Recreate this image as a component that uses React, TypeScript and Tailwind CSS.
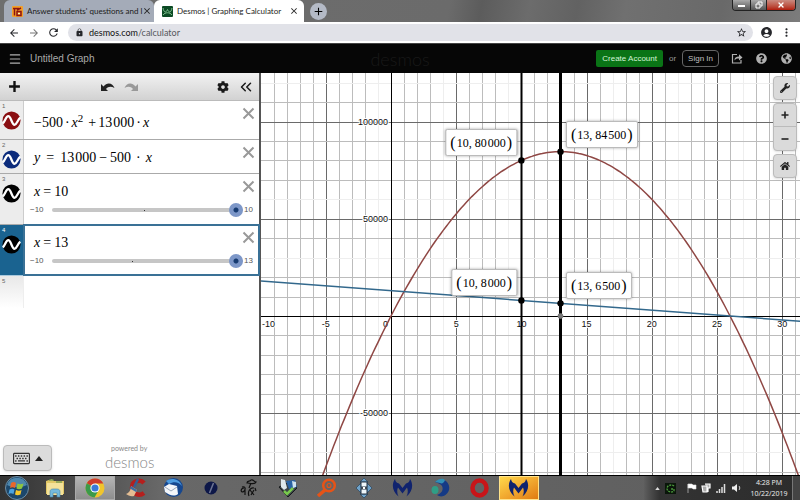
import { useState } from 'react'
import type { ReactNode } from 'react'
import {
  MdArrowBack,
  MdArrowForward,
  MdRefresh,
  MdLock,
  MdStarBorder,
  MdAccountCircle,
  MdMoreVert,
  MdClose,
  MdAdd,
} from 'react-icons/md'
import { FaCog, FaGlobeAmericas, FaHome, FaQuestionCircle, FaRegKeyboard, FaWrench } from 'react-icons/fa'
import { ChevronsLeft, Menu, X } from 'lucide-react'

/* ---------- browser chrome ---------- */

function BrowserTab({ title, icon, active }: { title: string; icon: ReactNode; active?: boolean }) {
  return (
    <div
      className={`flex h-full w-[150px] items-center rounded-t-md pl-2 pr-1 ${active ? 'bg-white' : 'bg-[#a4abb8]'}`}
    >
      {icon}
      <span className="ml-1 flex-1 whitespace-nowrap text-[8px] leading-4 text-[#1c1c20]">{title}</span>
      <button type="button" aria-label={`Close ${title}`} className="flex size-3 items-center justify-center text-[#222]">
        <MdClose size={10} />
      </button>
    </div>
  )
}

function BrowserChrome() {
  return (
    <header className="font-['Lato','Noto_Sans',sans-serif]">
      <div className="flex h-[22px] items-stretch bg-[linear-gradient(100deg,#6e6e6e_0%,#6b6b6b_56%,#5c5c5c_60%,#6c6c6c_66%,#626262_72%,#707070_78%,#696969_90%,#7c7c7c_100%)] pl-1">
        <BrowserTab
          title="Answer students' questions and l"
          icon={
            <svg viewBox="0 0 11 11" className="size-[11px] shrink-0">
              <rect width="11" height="11" rx="1" fill="#f2a02a" />
              <path d="M1 2.500h6M2.500 2.500v7M5 5.500h4v4H5zM5 4l4-2" stroke="#8d1411" strokeWidth="1.500" fill="none" />
              <path d="M6 7.500h2" stroke="#fff2c0" />
            </svg>
          }
        />
        <BrowserTab
          active
          title="Desmos | Graphing Calculator"
          icon={
            <svg viewBox="0 0 11 11" className="size-[11px] shrink-0">
              <rect width="11" height="11" rx="1" fill="#0b4a24" />
              <path d="M1 2c1 5 3 5 4.500 1.500C7 7 9 7 10 2M1 9c2-3 7-3 9 0" stroke="#7fc08e" fill="none" />
            </svg>
          }
        />
        <button
          type="button"
          aria-label="New tab"
          className="ml-[6px] flex size-[17px] items-center justify-center self-center rounded-full bg-[#b4bac6] text-black"
        >
          <MdAdd size={13} />
        </button>
        <div className="ml-auto mr-1 flex h-[11px] overflow-hidden rounded-b border border-t-0 border-[#222] text-white">
          <button type="button" aria-label="Minimize" className="flex w-[17px] items-end justify-center bg-linear-to-b from-[#aaa] to-[#555] pb-[3px]">
            <span className="h-[2px] w-[7px] bg-white" />
          </button>
          <button type="button" aria-label="Restore" className="flex w-[17px] items-center justify-center border-x border-[#222] bg-linear-to-b from-[#aaa] to-[#555]">
            <svg viewBox="0 0 8 8" className="size-[8px]">
              <path d="M3 2.500V1h4v4H5.500M1 3h4v4H1z" fill="none" stroke="#fff" />
            </svg>
          </button>
          <button type="button" aria-label="Close window" className="flex w-[28px] items-center justify-center bg-linear-to-b from-[#c98a80] to-[#b01808]">
            <X size={8} strokeWidth={4} />
          </button>
        </div>
      </div>
      <div className="flex h-[22px] items-center border-b border-[#444] bg-white text-[#26272b]">
        <div className="flex w-[68px] items-center justify-between pl-2 pr-2">
          <button type="button" aria-label="Back"><MdArrowBack size={12} /></button>
          <button type="button" aria-label="Forward" className="text-[#777]"><MdArrowForward size={12} /></button>
          <button type="button" aria-label="Reload"><MdRefresh size={13} /></button>
        </div>
        <div className="flex h-[17px] flex-1 items-center rounded-full bg-[#e1e2e8] px-[6px]">
          <MdLock size={9} className="ml-[1px]" />
          <a href="#" className="ml-[5px] flex-1 text-[9px] leading-4 text-[#111]">
            desmos.com<span className="text-[#55575c]">/calculator</span>
          </a>
          <button type="button" aria-label="Bookmark"><MdStarBorder size={11} /></button>
        </div>
        <button type="button" aria-label="Profile" className="ml-[7px]"><MdAccountCircle size={13} /></button>
        <button type="button" aria-label="Menu" className="ml-[7px] mr-[7px]"><MdMoreVert size={13} /></button>
      </div>
    </header>
  )
}

/* ---------- desmos header ---------- */

function AppHeader() {
  return (
    <div className="flex h-[29px] items-center bg-[#060606] pl-2 pr-2 text-[#b0b0b0]">
      <div className="flex flex-1 items-center">
        <button type="button" aria-label="Open menu">
          <Menu size={14} strokeWidth={2} />
        </button>
        <h1 className="ml-2 text-[10px] text-[#a9a9a9]">Untitled Graph</h1>
      </div>
      <div className="font-['Lato',sans-serif] text-[18px] font-light leading-6 text-[#191919]">desmos</div>
      <div className="flex flex-1 items-center justify-end text-[8px]">
        <button type="button" className="h-[17px] rounded-xs bg-[#0a7416] px-[6px] text-[#d5f5d8]">Create Account</button>
        <span className="mx-[6px] text-[#999]">or</span>
        <button type="button" className="h-[17px] rounded-sm border border-[#666] px-[5px] text-[#c0c0c0]">Sign In</button>
        <button type="button" aria-label="Share" className="ml-3">
          <svg viewBox="0 0 12 11" className="h-[11px] w-[12px]">
            <path d="M6 1.500H1.500v8.500h8.500V7" fill="none" stroke="#b0b0b0" strokeWidth="1.200" />
            <path d="M3.500 7.500c0-3 1.500-4 4.500-4V1.200L11.500 4.500 8 7.500V5.500c-2 0-3.500.3-4.500 2z" fill="#b0b0b0" />
          </svg>
        </button>
        <button type="button" aria-label="Help" className="ml-[13px]"><FaQuestionCircle size={11} /></button>
        <button type="button" aria-label="Language" className="ml-[14px]"><FaGlobeAmericas size={11} /></button>
      </div>
    </div>
  )
}

/* ---------- expression list ---------- */

function Thousands({ head, tail }: { head: string; tail: string }) {
  return (
    <>
      {head}
      <span className="ml-[1px]">{tail}</span>
    </>
  )
}

interface ExpressionRowProps {
  index: number
  color: string
  math: ReactNode
  tall?: boolean
  selected?: boolean
  slider?: { min: number; max: number }
}

function ExpressionRow({ index, color, math, tall, selected, slider }: ExpressionRowProps) {
  const [value, setValue] = useState(slider ? slider.max : 0)

  return (
    <li className={`flex border-b ${selected ? 'border-[#a9c9dd]' : 'border-[#aaa]'}`}>
      <div className={`w-6 shrink-0 border-r ${selected ? 'border-[#1a6390] bg-[#1a6390] text-white' : 'border-[#ccc] bg-[#ececec] text-[#666]'}`}>
        <div className="h-[10px] pl-[2px] pt-[2px] text-[6px] leading-[6px]">{index}</div>
        <button type="button" aria-label={`Toggle expression ${index}`} className="ml-[2px] block">
          <svg viewBox="0 0 20 20" className="size-[19px]">
            <circle cx="10" cy="10" r="9.500" fill={color} />
            <path d="M.8 13C3.500 11 4 5.500 6.600 5.500c3 0 3.600 9 6.600 9 2.400 0 3-5 6-7.500" fill="none" stroke="#fff" strokeWidth="2.400" />
          </svg>
        </button>
      </div>
      <div
        className={`flex-1 pl-[10px] pr-1 pt-[6px] ${selected ? 'outline-2 -outline-offset-1 outline-[#3a7196]' : ''} ${slider || tall ? 'pb-[6px]' : 'pb-[5px]'}`}
      >
        <div className="flex items-start justify-between">
          <div className={`whitespace-nowrap font-['Liberation_Serif',serif] text-[14px] leading-5 text-black ${tall ? 'pt-[6px]' : 'pt-[2px]'}`}>
            {math}
          </div>
          <button type="button" aria-label={`Delete expression ${index}`}>
            <svg viewBox="0 0 13 13" className="size-[13px]">
              <path d="M1.500 1.500l10 10M11.500 1.500l-10 10" stroke="#999" strokeWidth="2" />
            </svg>
          </button>
        </div>
        {slider && (
          <div className="-ml-[4px] flex h-4 items-center text-[8px] text-[#555]">
            <span className="w-[22px]">{`−${Math.abs(slider.min)}`}</span>
            <div className="relative flex flex-1 items-center">
              <input
                type="range"
                aria-label={`x value, expression ${index}`}
                min={slider.min}
                max={slider.max}
                value={value}
                onChange={(e) => setValue(Number(e.target.value))}
                className="h-1 w-full appearance-none rounded-full bg-[#c6c6c6] [&::-webkit-slider-thumb]:size-[14px] [&::-webkit-slider-thumb]:appearance-none [&::-webkit-slider-thumb]:rounded-full [&::-webkit-slider-thumb]:bg-[radial-gradient(circle,#163a70_0px,#163a70_2px,#7d97c8_3px)]"
              />
              <span
                className="absolute size-[1px] bg-[#333]"
                style={{ left: `${(-slider.min / (slider.max - slider.min)) * 96}%` }}
              />
            </div>
            <span className="w-[12px] pl-[1px]">{slider.max}</span>
          </div>
        )}
      </div>
    </li>
  )
}

function ExpressionPanel() {
  return (
    <aside className="flex w-[261px] shrink-0 flex-col border-r-2 border-[#555] bg-white">
      <div className="flex h-[28px] items-center border-b border-[#bbb] bg-linear-to-b from-[#f2f2f2] to-[#d2d2d2] pl-2 pr-2 text-[#1a1a1a]">
        <button type="button" aria-label="Add item">
          <svg viewBox="0 0 12 12" className="size-[13px]">
            <path d="M6 1v10M1 6h10" stroke="#111" strokeWidth="2.200" />
          </svg>
        </button>
        <div className="mx-auto flex gap-[9px]">
          <button type="button" aria-label="Undo">
            <svg viewBox="0 0 14 10" className="h-[10px] w-[14px]">
              <path d="M0 2v7h7L5 7c2-2.500 5-3 8.500-1C12 1 6-.5 2.500 4.500z" fill="#222" />
            </svg>
          </button>
          <button type="button" aria-label="Redo">
            <svg viewBox="0 0 14 10" className="h-[10px] w-[14px]">
              <path d="M14 2v7H7l2-2C7 4.500 4 4 .5 6 2 1 8-.5 11.500 4.500z" fill="#999" />
            </svg>
          </button>
        </div>
        <button type="button" aria-label="Edit list" className="mr-2"><FaCog size={12} /></button>
        <button type="button" aria-label="Hide list"><ChevronsLeft size={18} strokeWidth={2} className="-mr-1" /></button>
      </div>
      <ol>
        <ExpressionRow
          index={1}
          color="#8a0f12"
          tall
          math={
            <>
              −500<span className="mx-[2px]">·</span><i>x</i>
              <sup className="text-[11px] leading-none">2</sup>
              <span className="ml-[5px]">+</span>
              <span className="ml-[2px]"><Thousands head="13" tail="000" /></span>
              <span className="mx-[2px]">·</span><i>x</i>
            </>
          }
        />
        <ExpressionRow
          index={2}
          color="#0c2c7c"
          math={
            <>
              <i>y</i>
              <span className="mx-[6px]">=</span>
              <Thousands head="13" tail="000" />
              <span className="mx-[3px]">−</span>500
              <span className="mx-[5px]">·</span>
              <i>x</i>
            </>
          }
        />
        <ExpressionRow
          index={3}
          color="#000"
          slider={{ min: -10, max: 10 }}
          math={<><i>x</i><span className="mx-[3px]">=</span>10</>}
        />
        <ExpressionRow
          index={4}
          color="#000"
          selected
          slider={{ min: -10, max: 13 }}
          math={<><i>x</i><span className="mx-[3px]">=</span>13</>}
        />
        <li className="flex h-[32px]">
          <div className="w-6 border-r border-[#eee] bg-linear-to-b from-[#e8e8e8] to-white pl-[2px] pt-[2px] text-[6px] leading-[6px] text-[#666]">5</div>
        </li>
      </ol>
      <div className="mt-auto flex items-end pb-[4px] pl-[3px]">
        <button
          type="button"
          aria-label="Show keypad"
          className="flex h-[26px] w-[49px] items-center justify-center gap-[5px] rounded-sm border border-[#bbb] bg-[#dcdcdc] text-[#333] shadow-sm"
        >
          <FaRegKeyboard size={17} />
          <svg viewBox="0 0 8 5" className="h-[5px] w-[8px]"><path d="M0 5l4-5 4 5z" fill="#222" /></svg>
        </button>
        <div className="ml-[53px] font-['Lato',sans-serif] text-[#888]">
          <div className="pl-[6px] text-[7px] leading-[9px]">powered by</div>
          <div className="text-[15px] font-light leading-[18px]">desmos</div>
        </div>
      </div>
    </aside>
  )
}

/* ---------- graph ---------- */

const ORIGIN = { x: 130, y: 243 }
const UNIT_X = 13.04
const UNIT_Y = 19.45 / 10000

const toX = (x: number) => ORIGIN.x + x * UNIT_X
const toY = (y: number) => ORIGIN.y - y * UNIT_Y
const crisp = (n: number) => Math.round(n) + 0.5

const columns = Array.from({ length: 120 }, (_, i) => i - 9)
const rows = Array.from({ length: 70 }, (_, i) => 12 - i)
const faintColumns = [-1, 4, 9, 17, 22, 27]
const faintRows = [12, 6, 3, -7]

const profit = (x: number) => -500 * x * x + 13000 * x
const parabola = Array.from({ length: 221 }, (_, i) => -8 + i * 0.2)
  .map((x) => `${toX(x).toFixed(1)},${toY(profit(x)).toFixed(1)}`)
  .join(' ')

const points = [
  { x: 10, y: 80000, head: '80', tail: '000', side: 'left' },
  { x: 10, y: 8000, head: '8', tail: '000', side: 'left' },
  { x: 13, y: 84500, head: '84', tail: '500', side: 'right' },
  { x: 13, y: 6500, head: '6', tail: '500', side: 'right' },
]

const lineColor = (n: number, faint: number[]) => (n % 5 === 0 ? '#6a6a6a' : faint.includes(n) ? '#eeeeee' : '#bcbcbc')

function GraphPaper() {
  return (
    <section className="relative flex-1 overflow-hidden bg-white" aria-label="Graph paper">
      <svg className="absolute inset-0 h-full w-full">
        {columns.map((n) => (
          <line key={n} x1={crisp(toX(n))} x2={crisp(toX(n))} y1="0" y2="100%" stroke={lineColor(n, faintColumns)} />
        ))}
        {rows.map((n) => (
          <line key={n} y1={crisp(toY(n * 10000))} y2={crisp(toY(n * 10000))} x1="0" x2="100%" stroke={lineColor(n, faintRows)} />
        ))}
        <line x1={130.5} x2={130.5} y1="0" y2="100%" stroke="#000" />
        <line y1={243.5} y2={243.5} x1="0" x2="100%" stroke="#000" />
        <g
          fill="#111"
          stroke="#fff"
          strokeWidth="2"
          paintOrder="stroke"
          className="font-['Liberation_Sans',sans-serif] text-[9px]"
        >
          <text x="1" y="254">-10</text>
          <text x={toX(-5)} y="254" textAnchor="middle">-5</text>
          <text x="127" y="254" textAnchor="end">0</text>
          {[5, 10, 15, 20, 25, 30].map((n) => (
            <text key={n} x={toX(n)} y="254" textAnchor="middle">{n}</text>
          ))}
          {[100000, 50000, -50000].map((n) => (
            <text key={n} x="127" y={toY(n) + 3} textAnchor="end">{n}</text>
          ))}
        </g>
        <polyline points={parabola} fill="none" stroke="#8f4744" strokeWidth="1.500" />
        <line x1={toX(-11)} y1={toY(18500)} x2={toX(40)} y2={toY(-7000)} stroke="#32688c" strokeWidth="1.500" />
        <line x1="260.500" x2="260.500" y1="0" y2="100%" stroke="#000" strokeWidth="2" />
        <line x1="299.500" x2="299.500" y1="0" y2="100%" stroke="#000" strokeWidth="3" />
        <circle cx="299.500" cy="243" r="2.800" fill="#777" />
        {points.map((p) => (
          <circle key={`${p.x}-${p.y}`} cx={toX(p.x)} cy={toY(p.y)} r="3.200" fill="#000" />
        ))}
      </svg>
      {points.map((p) => (
        <div
          key={`${p.x}-${p.y}`}
          className={`absolute flex h-[27px] items-center whitespace-nowrap rounded-xs border border-[#bbb] bg-white px-[4px] font-['Liberation_Serif',serif] text-[12px] text-black shadow-[0_0_3px_rgba(0,0,0,0.35)] ${p.side === 'left' ? '-translate-x-full' : ''}`}
          style={{
            left: Math.round(toX(p.x)) + (p.side === 'left' ? -4 : 5),
            top: Math.round(toY(p.y)) - 31,
          }}
        >
          <span className="text-[16px]">(</span>
          <span className="ml-[1px]">{p.x},</span>
          <span className="ml-[3px] mr-[1px]"><Thousands head={p.head} tail={p.tail} /></span>
          <span className="text-[16px]">)</span>
        </div>
      ))}
      <div className="absolute right-[3px] top-[3px] flex flex-col gap-[3px] text-[#222]">
        <button type="button" aria-label="Graph settings" className="flex size-[24px] items-center justify-center rounded-sm border border-[#bbb] bg-[#dadada] shadow">
          <FaWrench size={10} />
        </button>
        <div className="flex flex-col rounded-sm border border-[#bbb] bg-[#dadada] shadow">
          <button type="button" aria-label="Zoom in" className="flex h-[23px] items-center justify-center border-b border-[#bbb]">
            <svg viewBox="0 0 8 8" className="size-[8px]"><path d="M4 .5v7M.5 4h7" stroke="#222" strokeWidth="1.600" /></svg>
          </button>
          <button type="button" aria-label="Zoom out" className="flex h-[23px] items-center justify-center">
            <svg viewBox="0 0 8 8" className="size-[8px]"><path d="M.5 4h7" stroke="#222" strokeWidth="1.600" /></svg>
          </button>
        </div>
        <button type="button" aria-label="Default viewport" className="flex size-[24px] items-center justify-center rounded-sm border border-[#bbb] bg-[#dadada] shadow">
          <FaHome size={10} />
        </button>
      </div>
    </section>
  )
}

/* ---------- taskbar ---------- */

const wings = (
  <path
    d="M3 1C-.5 6 0 13 6.500 18.500 5 15.500 4.800 12 6 9.500l4.500 6 4.500-6c1.200 2.500 1 6-.5 9C21 13 21.500 6 18 1c-.5 3-2 4-4 4.500L10.500 10 7 5.500C5 5 3.500 4 3 1z"
    fill="#10236e"
  />
)

const taskbarApps: { name: string; art: ReactNode; highlight?: 'open' | 'alert' }[] = [
  {
    name: 'Explorer',
    art: (
      <>
        <path d="M1 3l6-2 2 2h10v13H1z" fill="#e2c765" />
        <path d="M2 5h16v12H2z" fill="#f4e19a" />
        <path d="M4 2h5M11 4h6" stroke="#4f8a4e" />
        <path d="M5 19v-5c0-2 1-3 3-3h4c2 0 3 1 3 3v5h-3v-4H8v4z" fill="#75b9dc" stroke="#3f83ab" strokeWidth=".6" />
      </>
    ),
  },
  {
    name: 'Chrome',
    highlight: 'open',
    art: (
      <>
        <circle cx="10" cy="10" r="9.500" fill="#f0c52c" />
        <path d="M10 10L1.800 5.200A9.500 9.500 0 0 1 18.300 5.500H10z" fill="#cf3a2c" />
        <path d="M1.800 5.200A9.500 9.500 0 0 0 9.500 19.500L13.800 12 10 10z" fill="#3b9a4a" />
        <circle cx="10" cy="10" r="4.600" fill="#fff" />
        <circle cx="10" cy="10" r="3.600" fill="#3a78d8" />
      </>
    ),
  },
  {
    name: 'CCleaner',
    art: (
      <>
        <path d="M19 5C15.500 1 7 2.500 7 9.500S14.500 18.500 19 15" fill="none" stroke="#b51f1d" strokeWidth="4.500" />
        <path d="M13 1l-4 8" stroke="#365f92" strokeWidth="2.500" />
        <path d="M6 8l6 4-3 6c-3 1-6-.5-8-2 3-1 5-4 5-8z" fill="#e4bd93" />
        <path d="M6 8l6 4-1 2-6-3.500z" fill="#3d6da3" />
      </>
    ),
  },
  {
    name: 'Thunderbird',
    art: (
      <>
        <circle cx="10.500" cy="9.500" r="9.500" fill="#16478f" />
        <path d="M3 3c5-4 14-2 16 5-3-4-8-5-13-2z" fill="#4c9be0" />
        <path d="M1 9l5-3 8 2 1 8c-4 3-9 1-13-2z" fill="#f3f6fa" />
        <path d="M2 9l6 4 6-4" stroke="#98a7ba" fill="none" />
      </>
    ),
  },
  {
    name: 'Eclipse',
    art: (
      <>
        <circle cx="10" cy="10" r="6.500" fill="#0d1748" />
        <path d="M12.500 5l-4 10" stroke="#6e7694" strokeWidth="1.500" />
      </>
    ),
  },
  {
    name: 'Sketch',
    art: (
      <path
        d="M8 5c0-3 3-1 4-3 3-1 2 2 5 2-1 2-4 2-8 1zM12 5l-2 5M3 9c4-1 4 3 1 5-3 0-2-4 1-4M6 10v7M10 18c-2-5 2-9 5-8M11 12l4 5M12 17l3-5M16 10l1 3"
        stroke="#111"
        strokeWidth="1.200"
        fill="none"
      />
    ),
  },
  {
    name: 'Media',
    art: (
      <>
        <path d="M1 9l9-4 9 5-9 9z" fill="#3b4348" stroke="#15191b" />
        <path d="M3 1l4 1 2 8-3 2-3-3z" fill="#dfe7eb" />
        <path d="M8 3l9-1 2 7-8 2z" fill="#2862a4" />
        <path d="M14 3l4 1v5l-3 1z" fill="#cfe2ef" />
        <path d="M6 13l3 3 6-6" stroke="#78c84d" strokeWidth="2.500" fill="none" />
      </>
    ),
  },
  {
    name: 'Search',
    art: (
      <>
        <circle cx="13" cy="7.500" r="5.800" fill="none" stroke="#e65317" strokeWidth="2.500" />
        <circle cx="13" cy="7.500" r="2" fill="none" stroke="#e65317" strokeWidth="1.200" />
        <path d="M9 12l-7 6" stroke="#e65317" strokeWidth="3.500" />
      </>
    ),
  },
  {
    name: 'Sync',
    art: (
      <>
        <path d="M10 0l4 4h-8zM10 20l4-4h-8zM2 10l5-5v10zM18 10l-5-5v10z" fill="#6fa3cb" stroke="#20384f" strokeWidth=".6" />
        <rect x="7" y="4" width="6" height="5" fill="#eef6fa" stroke="#234" />
        <rect x="7" y="11" width="6" height="5" fill="#eef6fa" stroke="#234" />
        <path d="M9 10h2" stroke="#fff" strokeWidth="2" />
      </>
    ),
  },
  { name: 'Malwarebytes', art: wings },
  {
    name: 'Orb',
    art: (
      <>
        <path d="M5 4c6-6 16-1 14 8-2 6-8 8-12 5 4-1 7-5 5-9-1-2-4-3-7-4z" fill="#153a85" />
        <path d="M5 4c4-4 8-4 10-2-1 3-3 4-5 3z" fill="#3190b5" />
        <ellipse cx="5" cy="12" rx="3.500" ry="4" fill="#2f9e86" />
      </>
    ),
  },
  {
    name: 'Opera',
    art: <ellipse cx="11.500" cy="10" rx="7" ry="7.500" fill="none" stroke="#c81519" strokeWidth="4.500" />,
  },
  { name: 'Malwarebytes scan', art: wings, highlight: 'alert' },
]

function Taskbar() {
  return (
    <footer className="flex h-[25px] items-stretch border-t border-black bg-linear-to-r from-[#333] via-[#686868] via-20% to-[#5e5e5e]">
      <button type="button" aria-label="Start" className="flex w-9 items-center justify-center pr-[3px]">
        <svg viewBox="0 0 24 24" className="size-[24px]">
          <circle cx="12" cy="12" r="11.500" fill="#1c476b" stroke="#6f8fa6" />
          <path d="M2 9a10.500 10.500 0 0 1 20 0c-6 3-14 3-20 0z" fill="#4d86ac" />
          <path d="M6 7c2-1.500 4-1 5 0l-1 5c-2-1-3-1-5 0z" fill="#e8672c" />
          <path d="M12.500 7.500c2 1 4 1 6 0l-1.500 5c-2 1-4 1-5.500 0z" fill="#8ec63f" />
          <path d="M4.500 13.500c2-1 3.500-1 5 0l-1 4.500c-2-1-3.500-1-5 0z" fill="#4aa3e0" />
          <path d="M11 14c2 1 4 1 5.500 0l-1 4.500c-2 1-4 1-5.500 0z" fill="#f4c62b" />
        </svg>
      </button>
      <div className="flex w-[504px]">
        {taskbarApps.map((app) => (
          <button
            key={app.name}
            type="button"
            aria-label={app.name}
            className={`flex flex-1 items-center justify-center ${
              app.highlight === 'open'
                ? 'mx-[1px] border border-[#aaa] bg-linear-to-b from-[#b5b5b5] to-[#8e8e8e]'
                : app.highlight === 'alert'
                  ? 'mx-[1px] border border-[#ffe28a] bg-linear-to-br from-[#ffd84a] to-[#e07a10]'
                  : ''
            }`}
          >
            <svg viewBox="0 0 21 20" className="h-[20px] w-[21px]">{app.art}</svg>
          </button>
        ))}
      </div>
      <div className="ml-auto flex w-[156px] items-center bg-linear-to-r from-[#5e5e5e] via-[#333] via-10% to-[#2c2c2c]">
        <div className="flex flex-1 items-center justify-between pl-[11px] pr-[8px]">
          <svg viewBox="0 0 6 4" className="h-[3px] w-[5px]"><path d="M0 4l3-4 3 4z" fill="#ddd" /></svg>
          <svg viewBox="0 0 11 11" className="size-[11px]">
            <rect width="11" height="11" fill="#0a160a" />
            <path d="M9 3C7 1 2 2 2 5.500S7 10 9 8V6H6" stroke="#4c9a3c" strokeWidth="1.300" strokeDasharray="2 1" fill="none" />
          </svg>
          <svg viewBox="0 0 10 10" className="ml-[6px] size-[10px]"><path d="M1 1v9M1 1h4l1 1h3v4H6L5 5H1z" fill="#fff" stroke="#ddd" strokeWidth=".6" /></svg>
          <svg viewBox="0 0 10 10" className="size-[10px]"><path d="M1 3h5v6H2zM4 1h5v4H7v4" fill="#aaa" stroke="#fff" strokeWidth="1.200" /></svg>
          <svg viewBox="0 0 10 10" className="size-[10px]"><path d="M1 10V8M3.500 10V6M6 10V4M8.500 10V1" stroke="#ddd" strokeWidth="1.500" /></svg>
          <svg viewBox="0 0 10 10" className="size-[10px]"><path d="M1 3.500h2L6 1v8L3 6.500H1z" fill="#eee" /><path d="M8 3c1 1 1 3 0 4" stroke="#ccc" fill="none" /></svg>
        </div>
        <div className="w-[40px] text-center font-['Open_Sans','Noto_Sans',sans-serif] text-[7px] leading-[11px] text-[#f0f0f0]">
          <div>4:28 PM</div>
          <div>10/22/2019</div>
        </div>
        <div className="ml-[3px] h-full w-[8px] border-l border-[#777] bg-[#444]" />
      </div>
    </footer>
  )
}

export default function App() {
  return (
    <div className="flex min-h-screen flex-col bg-white font-['Liberation_Sans',sans-serif]">
      <BrowserChrome />
      <AppHeader />
      <main className="flex flex-1">
        <ExpressionPanel />
        <GraphPaper />
      </main>
      <Taskbar />
    </div>
  )
}
